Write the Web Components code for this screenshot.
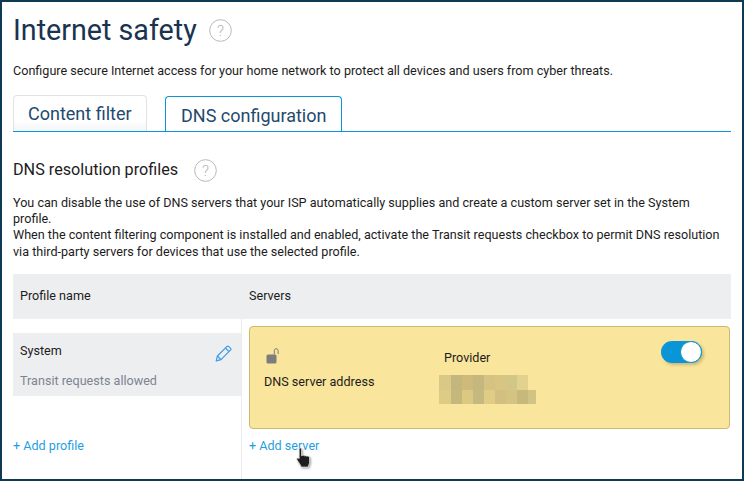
<!DOCTYPE html>
<html><head><meta charset="utf-8">
<style>
html,body{margin:0;padding:0;background:#fff}
body{width:744px;height:481px;overflow:hidden;font-family:Roboto,"Liberation Sans",sans-serif}
</style></head><body>
<app-page></app-page>
<script>
const Q=(s,c='#b5b5b5')=>`<svg width="${s}" height="${s}" viewBox="0 0 24 24" fill="none"><circle cx="12" cy="12" r="11.3" stroke="${c}" stroke-width="1"/><text x="12" y="17.6" text-anchor="middle" font-family="Roboto,sans-serif" font-weight="300" font-size="16" fill="${c}">?</text></svg>`;
function def(name,css,html,init){
  customElements.define(name,class extends HTMLElement{
    constructor(){super();const r=this.attachShadow({mode:'open'});r.innerHTML=`<style>${css}</style>${html}`;}
    connectedCallback(){init&&init(this.shadowRoot,this)}
  });
}
def('help-icon',':host{display:inline-flex;line-height:0}','<span id="i"></span>',(r,h)=>{r.getElementById('i').innerHTML=Q(+h.getAttribute('size')||24)});
def('tab-item',`:host{display:block;box-sizing:border-box;font-size:18px;color:#1f4a6e;line-height:21px}
:host([active]){height:35px;width:177px;padding:8px 0 0 15px;border:1px solid #0a96d6;border-bottom:0;border-radius:4px 4px 0 0;background:#fff;margin-bottom:-1px;position:relative}
:host(:not([active])){height:36px;width:134px;margin-top:-1px;padding:7px 0 0 14px;border:1px solid #dfe3e8;border-bottom:0;border-radius:4px 4px 0 0;background:linear-gradient(#fff 70%,#f3f5f8)}`,'<slot></slot>');
def('tab-bar',`:host{display:flex;gap:18px;border-bottom:1px solid #0a96d6;height:35px;margin-top:18px;align-items:flex-start}`,'<slot></slot>');
def('dns-toggle',`:host{display:block;width:41px;height:22px;border-radius:11px;background:#0a96d6;position:relative;box-shadow:2px 2px 3px rgba(120,100,40,.35)}
i{position:absolute;right:0;top:0;width:20px;height:20px;border-radius:50%;background:#fff;border:1px solid #0a96d6}`,'<i></i>');
def('lock-icon',':host{display:block;line-height:0}',`<svg width="14" height="16" viewBox="0 0 14 16"><rect x="0.5" y="6.5" width="10" height="9" rx="1.5" fill="#7d7d7d"/><path d="M8.300 6.500V2.600a1.900 1.900 0 0 1 3.800 0V6" fill="none" stroke="#7d7d7d" stroke-width="1"/></svg>`);
def('edit-icon',':host{display:block;line-height:0}',`<svg width="17" height="17" viewBox="0 0 17 17" fill="none" stroke="#3f9bea" stroke-width="1.200" stroke-linejoin="round"><path d="M1.200 15.800 2.400 11 11.800 1.600a1.500 1.500 0 0 1 2.100 0l1.500 1.500a1.500 1.500 0 0 1 0 2.100L6 14.600Z"/><path d="M10.400 3 14 6.600M2.400 11 6 14.600"/></svg>`);
def('pixel-blur',`:host{display:grid;grid-template-columns:12px repeat(7,11px) 8px;grid-template-rows:15px 14px;width:97px}`,'',(r)=>{
  const c=['#d9c886','#c4b67c','#cfb97b','#c5b77e','#d6c282','#d8c483','#d2c787','#e3d28e','#f9e59b',
           '#ddcb86','#c4b87c','#dcc981','#c5b97f','#e0cc84','#d3bf80','#d3c481','#c7b87c','#d0c383'];
  c.forEach(x=>{const d=document.createElement('div');d.style.background=x;r.appendChild(d)});
});
def('cursor-hand',':host{display:block;position:absolute;left:292px;top:445px;line-height:0;filter:drop-shadow(1px 1px 1px rgba(0,0,0,.4))}',`<svg width="20" height="22" viewBox="0 0 20 22"><path d="M5.200 2.200c0-1.500 2.300-1.500 2.300 0v6.500l1.200-.3c.6-.1 1.200 0 1.700.4l.6-.1c.7-.1 1.300.1 1.700.5l.7-.1c1.200-.1 2.100.7 2.100 1.900v4.300c0 1.300-.4 2.300-1.100 3.200v1.500H6.800v-1.300L3 12.800c-.9-1.100.5-2.500 1.600-1.600l.6.5Z" fill="#1d1d1d" stroke="#fff" stroke-width=".6"/></svg>`);
def('server-card',`:host{display:block;box-sizing:border-box;width:481px;height:103px;margin-left:7px;background:#f9e59b;border:1px solid #cdb96f;border-radius:4px;position:relative;font-size:12.6px;color:#1c1c1c}
.wrap{display:grid;grid-template-columns:180px 1fr auto;padding:14px 27px 0 14px;line-height:15px}
.l{display:flex;flex-direction:column;padding-top:7px}
lock-icon{margin:0 0 10px 2px}
.p{padding-top:9px}
pixel-blur{margin:10px 0 0 -5px}
`,`<div class="wrap"><div class="l"><lock-icon></lock-icon><span>DNS server address</span></div><div class="p"><span>Provider</span><pixel-blur></pixel-blur></div><dns-toggle></dns-toggle></div>`);
def('profile-table',`:host{display:block;font-size:12.6px;color:#1c1c1c;margin-top:13.8px}
.head{display:grid;grid-template-columns:228px 1fr;background:#eceef0;height:45px;padding-bottom:2px;box-sizing:border-box;align-items:center;line-height:15px}
.head span{padding-left:7px}
.head span+span{padding-left:8px}
.body{display:grid;grid-template-columns:228px 1fr;height:162px}
.left{padding-top:14px}
.right{border-left:1px solid #ececec;padding-top:7px}
.sys{background:#eceef0;height:63px;box-sizing:border-box;padding:10px 9px 0 7px;display:flex;justify-content:space-between;align-items:flex-start}
.sys div{display:flex;flex-direction:column;gap:15px;line-height:15px}
.sys small{font-size:12.6px;color:#7f8291}
.add{display:block;color:#1f9fe0;line-height:15px}
.left .add{margin-top:42px}
.right .add{margin:9px 0 0 7px}
edit-icon{margin-top:2px}
`,`<div class="head"><span>Profile name</span><span>Servers</span></div>
<div class="body"><div class="left"><div class="sys"><div><span>System</span><small>Transit requests allowed</small></div><edit-icon></edit-icon></div><span class="add">+ Add profile</span></div>
<div class="right"><server-card></server-card><span class="add">+ Add server</span></div></div>`);
def('app-page',`:host{display:block;box-sizing:border-box;width:744px;height:481px;border:solid #0f3a54;border-width:2px;padding:0 11px;color:#1c1c1c;position:relative;overflow:hidden;font-family:Roboto,"Liberation Sans",sans-serif}
h1{margin:0;padding-top:10px;font-weight:400;font-size:28.7px;line-height:36px;color:#1a3350;display:flex;align-items:center;gap:12px}
p{margin:0;font-size:12.6px;line-height:15px}
.intro{margin-top:15px}
h2{margin:26px 0 0;font-weight:400;font-size:16.2px;line-height:24px;display:flex;align-items:center;gap:16px;color:#1c1c1c}
.txt{margin-top:12.6px;line-height:16.4px}
`,`<h1>Internet safety <help-icon size="23"></help-icon></h1>
<p class="intro">Configure secure Internet access for your home network to protect all devices and users from cyber threats.</p>
<tab-bar><tab-item>Content filter</tab-item><tab-item active>DNS configuration</tab-item></tab-bar>
<h2>DNS resolution profiles <help-icon size="23"></help-icon></h2>
<p class="txt">You can disable the use of DNS servers that your ISP automatically supplies and create a custom server set in the System profile.<br>When the content filtering component is installed and enabled, activate the Transit requests checkbox to permit DNS resolution via third-party servers for devices that use the selected profile.</p>
<profile-table></profile-table><cursor-hand></cursor-hand>`);
</script></body></html>
